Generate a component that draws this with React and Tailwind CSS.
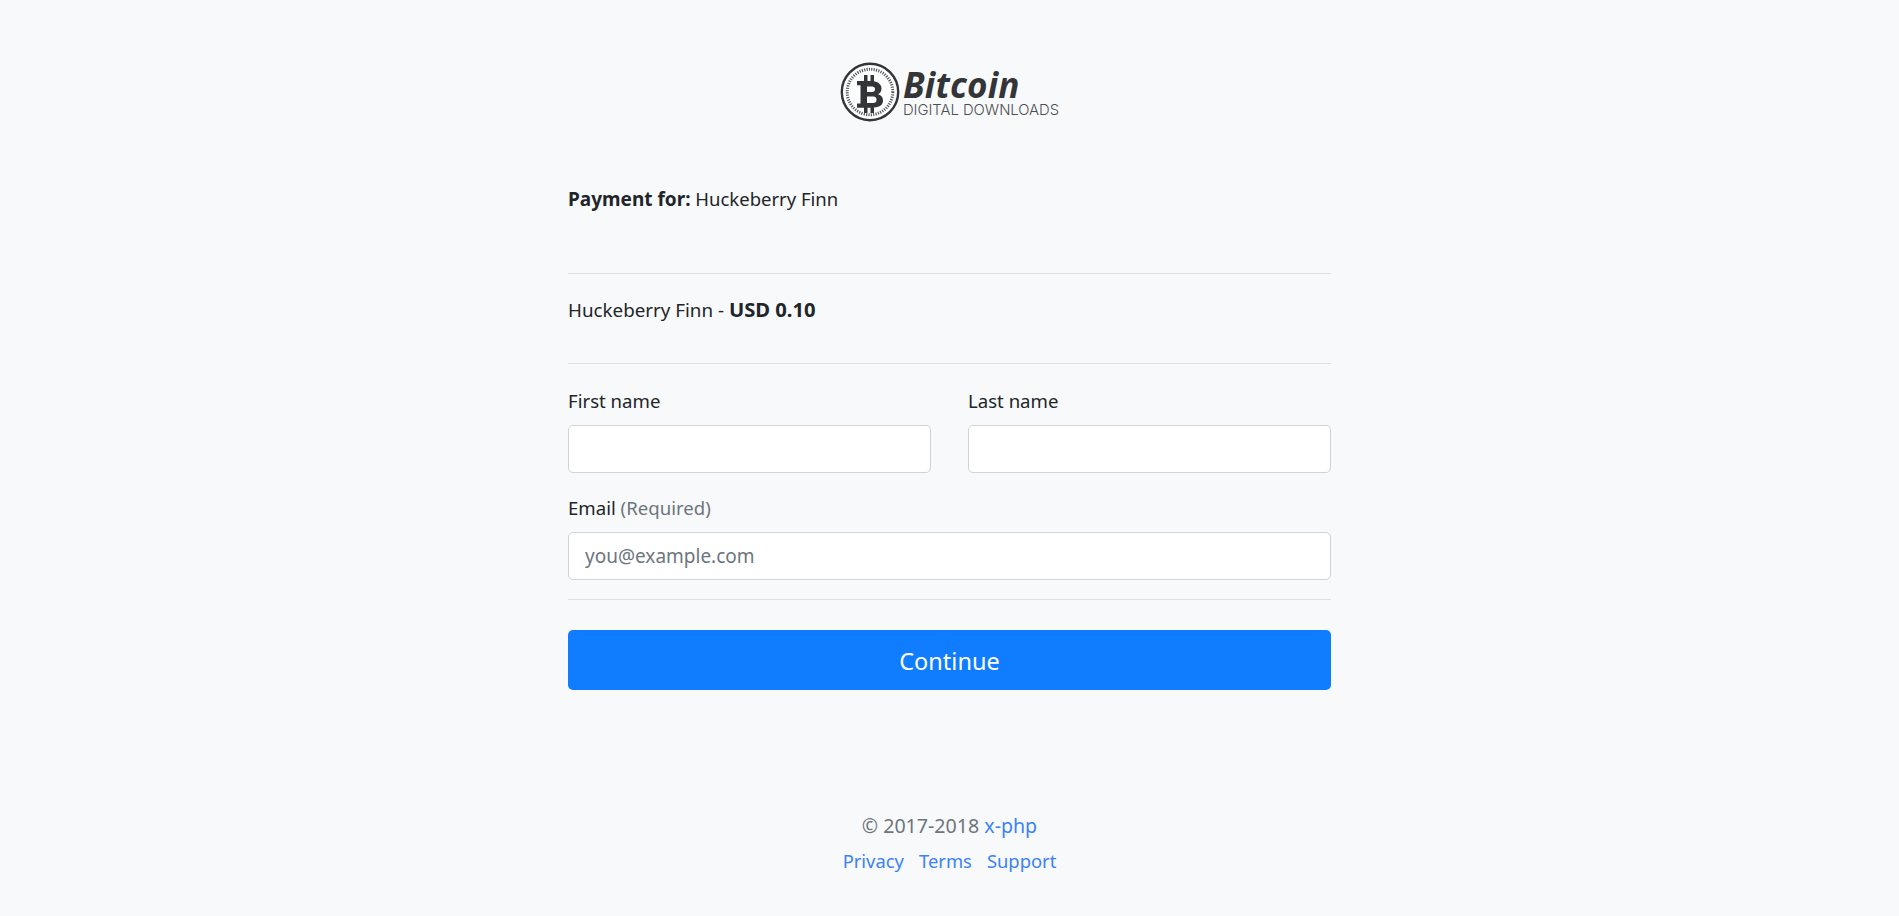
const BitcoinLogo = () => (
  <div className="flex items-center justify-center h-[60px] text-[#333538]">
    <svg width="60" height="60" viewBox="0 0 60 60" className="shrink-0">
      <circle cx="30" cy="30" r="28.200" fill="#ffffff" stroke="#333538" strokeWidth="2.400" />
      <circle cx="30" cy="30" r="22.800" fill="none" stroke="#55585c" strokeWidth="3" strokeDasharray="1.200 1.200" />
      <path
        fill="#333538"
        fillRule="evenodd"
        d="M17 19H24V13H27.500V19H30.500V13H34V19.300C39 20.200 41.500 23 41.500 26.800C41.500 29.400 40.200 31.200 38.200 32.200C41.200 33.200 43 35.400 43 38.400C43 42.600 40 45 34 45.500V51H30.500V45.700H27.500V51H24V45.700H17V41.500H20.500V23.200H17ZM27 24.500V30H32C34 30 35 28.900 35 27.200C35 25.600 34 24.500 32 24.500ZM27 34.500V41H33C35.300 41 36.500 39.800 36.500 37.700C36.500 35.700 35.300 34.500 33 34.500Z"
      />
    </svg>
    <div className="ml-[3px] flex flex-col">
      <span className="font-['Open_Sans',sans-serif] text-[35px] leading-[36px] font-bold italic tracking-[0.2px]">Bitcoin</span>
      <span className="font-['Inter',sans-serif] text-[14.800px] leading-[14px] font-light text-[#4b4e52] whitespace-nowrap">DIGITAL DOWNLOADS</span>
    </div>
  </div>
);

const Field = ({ label, hint, placeholder }) => (
  <div>
    <label className="block h-[30px] mb-[9px] text-[18.600px] leading-[30px]">
      {label} {hint && <span className="text-[#6c757d]">{hint}</span>}
    </label>
    <input
      placeholder={placeholder}
      className="block w-full h-[48px] px-[16px] bg-white border border-[#ced4da] rounded-[5px] text-[19px] text-[#495057] placeholder:text-[#6c757d]"
    />
  </div>
);

const App = () => {
  return (
    <div className="min-h-[916px] bg-[#f8f9fa] text-[#212529] text-[18.500px] font-['Noto_Sans',sans-serif]">
      <div className="w-[763px] mx-auto">
        <div className="pt-[62px]">
          <BitcoinLogo />
        </div>

        <p className="mt-[62px] h-[30px] leading-[30px]">
          <b className="text-[19px] font-bold">Payment for:</b> Huckeberry Finn
        </p>
        <hr className="mt-[59px] border-[#dfe0e1]" />

        <p className="mt-[20px] h-[30px] text-[18.800px] leading-[30px]">
          Huckeberry Finn - <b className="text-[20.200px] font-bold">USD 0.10</b>
        </p>
        <hr className="mt-[39px] border-[#dfe0e1]" />

        <div className="mt-[22px] grid grid-cols-2 gap-x-[37px]">
          <Field label="First name" />
          <Field label="Last name" />
        </div>
        <div className="mt-[20px]">
          <Field label="Email" hint="(Required)" placeholder="you@example.com" />
        </div>
        <hr className="mt-[19px] border-[#dfe0e1]" />

        <button className="block w-full h-[60px] mt-[30px] pt-[3px] bg-[#107cff] text-white text-[23.500px] rounded-[5px]">
          Continue
        </button>

        <footer className="mt-[121px] text-center">
          <p className="h-[30px] text-[19.600px] leading-[30px] text-[#6c757d]">
            © 2017-2018 <a className="text-[#3b82f6]">x-php</a>
          </p>
          <div className="mt-[5px] flex justify-center gap-[15px] text-[18.400px] leading-[30px] text-[#3b82f6]">
            <a>Privacy</a>
            <a>Terms</a>
            <a>Support</a>
          </div>
        </footer>
      </div>
    </div>
  );
};

export default App;
